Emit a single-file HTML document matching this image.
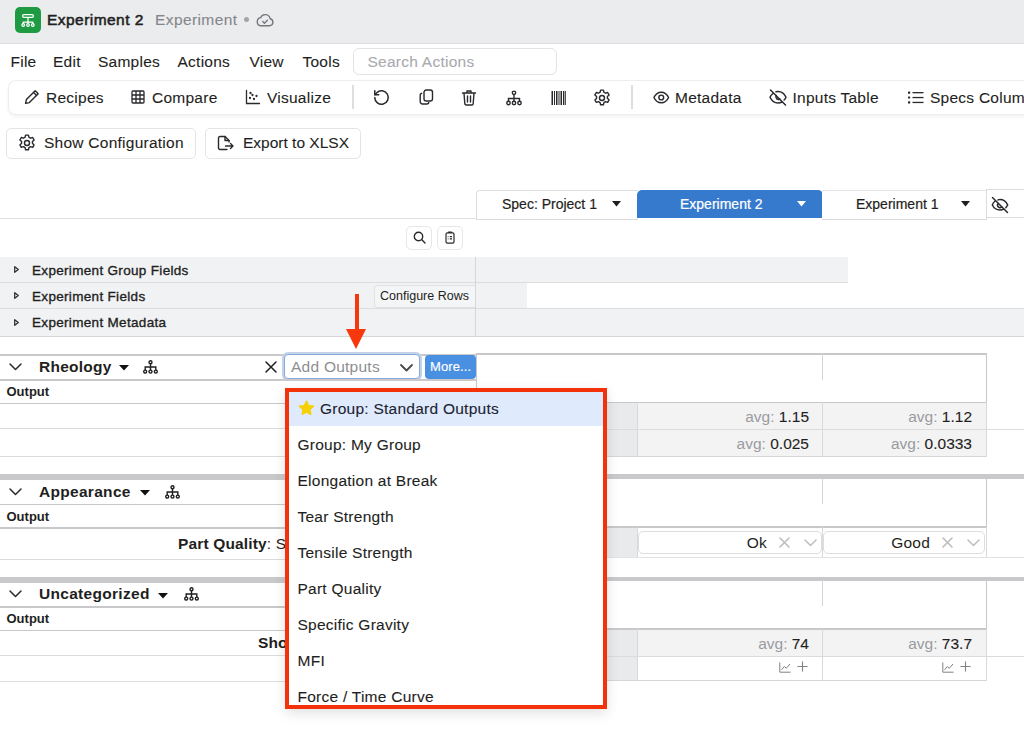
<!DOCTYPE html>
<html><head><meta charset="utf-8">
<style>
*{box-sizing:border-box;margin:0;padding:0}
html,body{width:1024px;height:734px;overflow:hidden;background:#fff;font-family:"Liberation Sans",sans-serif;color:#1f1f22}
.a{position:absolute;white-space:nowrap}
.t15{font-size:15.5px;letter-spacing:0.25px;line-height:18px;-webkit-text-stroke:0.1px currentColor}
svg{position:absolute;overflow:visible}
.hl{position:absolute;height:1px;background:#d6d6d6}
.n{-webkit-text-stroke:0.1px #1f1f22}
.vl{position:absolute;width:1px;background:#d6d6d6}
</style></head><body>

<!-- Title bar -->
<div class="a" style="left:0;top:0;width:1024px;height:44px;background:#ebecee;border-bottom:1px solid #dcdcdf"></div>
<div class="a" style="left:15px;top:7px;width:26px;height:26px;border-radius:5px;background:#1e9a42"></div>
<svg style="left:15px;top:7px" width="26" height="26" viewBox="0 0 26 26" fill="none" stroke="#fff" stroke-width="1.25">
  <rect x="7.6" y="7.7" width="10.8" height="2.6" rx="1.3"/>
  <path d="M13 10.3v3.2M8.2 16.6v-1.6h9.6v1.6M13 13.5v3.1"/>
  <circle cx="8.2" cy="18" r="1.3"/><circle cx="13" cy="18" r="1.3"/><circle cx="17.8" cy="18" r="1.3"/>
</svg>
<div class="a" style="left:47px;top:11px;font-size:15.5px;font-weight:400;line-height:18px;letter-spacing:0.45px;-webkit-text-stroke:0.55px #1f1f22">Experiment 2</div>
<div class="a t15" style="left:155px;top:11px;color:#85868a;letter-spacing:0.4px">Experiment</div>
<div class="a" style="left:244px;top:17px;width:5px;height:5px;border-radius:50%;background:#a5a6aa"></div>
<svg style="left:256px;top:13px" width="18" height="14" viewBox="0 0 18 14" fill="none" stroke="#76777b" stroke-width="1.4" stroke-linejoin="round" stroke-linecap="round">
  <path d="M4.5 12.8h9a3.6 3.6 0 0 0 .6-7.1A5 5 0 0 0 4.6 4.6 4.2 4.2 0 0 0 4.5 12.8z"/>
  <path d="M6.8 8.6l1.6 1.6 3-3"/>
</svg>

<!-- Menu bar -->
<div class="a t15" style="left:10.5px;top:53px">File</div>
<div class="a t15" style="left:53px;top:53px">Edit</div>
<div class="a t15" style="left:98px;top:53px">Samples</div>
<div class="a t15" style="left:177.5px;top:53px">Actions</div>
<div class="a t15" style="left:249.5px;top:53px">View</div>
<div class="a t15" style="left:302.5px;top:53px">Tools</div>
<div class="a" style="left:353px;top:48px;width:204px;height:27px;border:1px solid #e3e3e6;border-radius:6px"></div>
<div class="a t15" style="left:367.5px;top:53px;color:#a9aaae">Search Actions</div>

<!-- Toolbar -->
<div class="a" style="left:9px;top:81px;width:1100px;height:33px;border-radius:7px;background:#fff;box-shadow:0 0 0 1px #eeeef0,0 2px 4px rgba(0,0,0,0.08)"></div>


<!-- toolbar items -->
<svg style="left:24px;top:89px" width="16" height="16" viewBox="0 0 16 16" fill="none" stroke="#2a2a2e" stroke-width="1.4" stroke-linejoin="round" stroke-linecap="round">
  <path d="M11.2 1.8l3 3L5.4 13.6 1.6 14.4l.8-3.8z"/><path d="M9.6 3.4l3 3"/>
</svg>
<div class="a t15" style="left:46px;top:88.5px">Recipes</div>
<svg style="left:131px;top:90px" width="14" height="14" viewBox="0 0 14 14" fill="none" stroke="#2a2a2e" stroke-width="1.3">
  <rect x="1" y="1" width="12" height="12" rx="1"/><path d="M5 1v12M9 1v12M1 5h12M1 9h12"/>
</svg>
<div class="a t15" style="left:152px;top:88.5px">Compare</div>
<svg style="left:245px;top:89px" width="16" height="16" viewBox="0 0 16 16" fill="none" stroke="#2a2a2e" stroke-width="1.3" stroke-linecap="round">
  <path d="M1.5 1.5v13h13"/><circle cx="5" cy="9" r=".5"/><circle cx="7.5" cy="6" r=".5"/><circle cx="9" cy="10" r=".5"/><circle cx="11.5" cy="7" r=".5"/><circle cx="5.5" cy="4" r=".5"/>
</svg>
<div class="a t15" style="left:267px;top:88.5px">Visualize</div>
<div class="a" style="left:352px;top:85px;width:2px;height:24px;background:#dedee0"></div>
<!-- undo -->
<svg style="left:372px;top:88px" width="19" height="19" viewBox="0 0 24 24" fill="none" stroke="#2a2a2e" stroke-width="1.9" stroke-linecap="round" stroke-linejoin="round">
  <path d="M3.5 12a8.5 8.5 0 1 0 2.5-6L3.5 8.5"/><path d="M3.5 3.5v5h5"/>
</svg>
<!-- copy -->
<svg style="left:419px;top:89px" width="15" height="16" viewBox="0 0 15 16" fill="none" stroke="#2a2a2e" stroke-width="1.4" stroke-linejoin="round">
  <rect x="5" y="1" width="8.5" height="11" rx="2.2"/><path d="M3.2 4.2A2 2 0 0 0 1.2 6.2v6.6a2.2 2.2 0 0 0 2.2 2.2h4.4a2 2 0 0 0 2-2"/>
</svg>
<!-- trash -->
<svg style="left:461px;top:89px" width="16" height="17" viewBox="0 0 16 17" fill="none" stroke="#2a2a2e" stroke-width="1.4" stroke-linecap="round" stroke-linejoin="round">
  <path d="M1.5 4h13M6 4V2h4v2M3 4l.8 10.5a1.5 1.5 0 0 0 1.5 1.5h5.4a1.5 1.5 0 0 0 1.5-1.5L13 4M6.5 7v6M9.5 7v6"/>
</svg>
<!-- hierarchy -->
<svg style="left:506px;top:90px" width="16" height="16" viewBox="0 0 16 16" fill="none" stroke="#2a2a2e" stroke-width="1.4">
  <circle cx="8" cy="2.8" r="1.7"/><circle cx="2.5" cy="13" r="1.7"/><circle cx="8" cy="13" r="1.7"/><circle cx="13.5" cy="13" r="1.7"/>
  <path d="M8 4.5v6.8M2.5 11.3V8.5h11v2.8"/>
</svg>
<!-- barcode -->
<svg style="left:551px;top:91px" width="15" height="14" viewBox="0 0 15 14" fill="#2a2a2e">
  <rect x="0.5" y="0" width="1.5" height="14"/><rect x="3" y="0" width="1" height="14"/><rect x="5" y="0" width="1.5" height="14"/><rect x="7.5" y="0" width="1" height="14"/><rect x="9.5" y="0" width="1.5" height="14"/><rect x="12" y="0" width="1" height="14"/><rect x="13.6" y="0" width="1.2" height="14"/>
</svg>
<!-- gear -->
<svg style="left:592px;top:87.5px" width="20" height="20" viewBox="0 0 24 24" fill="none" stroke="#2a2a2e" stroke-width="1.7" stroke-linejoin="round">
  <path d="M10.3 2.5h3.4l.6 2.6 1.9 1.1 2.6-.8 1.7 2.9-2 1.9v2.2l2 1.9-1.7 2.9-2.6-.8-1.9 1.1-.6 2.6h-3.4l-.6-2.6-1.9-1.1-2.6.8-1.7-2.9 2-1.9v-2.2l-2-1.9 1.7-2.9 2.6.8 1.9-1.1z"/><circle cx="12" cy="12" r="3"/>
</svg>
<div class="a" style="left:631px;top:85px;width:2px;height:24px;background:#dedee0"></div>
<!-- eye -->
<svg style="left:653px;top:90.5px" width="16.5" height="13" viewBox="0 0 18 14" fill="none" stroke="#2a2a2e" stroke-width="1.6">
  <path d="M1 7C3 2.8 6 1.2 9 1.2S15 2.8 17 7c-2 4.2-5 5.8-8 5.8S3 11.2 1 7z"/><circle cx="9" cy="7" r="2.6"/>
</svg>
<div class="a t15" style="left:675px;top:88.5px">Metadata</div>
<!-- eye-off -->
<svg style="left:769px;top:89px" width="18" height="17" viewBox="0 0 18 17" fill="none" stroke="#2a2a2e" stroke-width="1.5" stroke-linecap="round">
  <path d="M4 4.5C2.6 5.5 1.6 6.8 1 8.2c2 4.2 5 5.8 8 5.8 1.5 0 2.8-.3 4-1M7 2.7C7.6 2.5 8.3 2.4 9 2.4c3 0 6 1.6 8 5.8-.5 1.1-1.1 2-1.9 2.8"/><path d="M7.2 6.5A2.6 2.6 0 0 0 10.8 10"/><path d="M1.5 1l15 15"/>
</svg>
<div class="a t15" style="left:792.5px;top:88.5px">Inputs Table</div>
<!-- list -->
<svg style="left:908px;top:91px" width="16" height="13" viewBox="0 0 16 13" fill="#2a2a2e">
  <rect x="0" y="0.5" width="2.2" height="2.2" rx=".5"/><rect x="0" y="5.4" width="2.2" height="2.2" rx=".5"/><rect x="0" y="10.3" width="2.2" height="2.2" rx=".5"/>
  <rect x="4.5" y="1" width="11" height="1.3"/><rect x="4.5" y="5.9" width="11" height="1.3"/><rect x="4.5" y="10.8" width="11" height="1.3"/>
</svg>
<div class="a t15" style="left:930px;top:88.5px">Specs Columns</div>

<!-- buttons row -->
<div class="a" style="left:6px;top:128px;width:190px;height:31px;border:1px solid #e4e4e7;border-radius:5px"></div>
<svg style="left:17px;top:133px" width="20" height="20" viewBox="0 0 24 24" fill="none" stroke="#2a2a2e" stroke-width="1.7" stroke-linejoin="round">
  <path d="M10.3 2.5h3.4l.6 2.6 1.9 1.1 2.6-.8 1.7 2.9-2 1.9v2.2l2 1.9-1.7 2.9-2.6-.8-1.9 1.1-.6 2.6h-3.4l-.6-2.6-1.9-1.1-2.6.8-1.7-2.9 2-1.9v-2.2l-2-1.9 1.7-2.9 2.6.8 1.9-1.1z"/><circle cx="12" cy="12" r="3"/>
</svg>
<div class="a t15" style="left:44px;top:134px">Show Configuration</div>
<div class="a" style="left:205px;top:128px;width:156px;height:31px;border:1px solid #e4e4e7;border-radius:5px"></div>
<svg style="left:217px;top:135px" width="17" height="16" viewBox="0 0 17 16" fill="none" stroke="#2a2a2e" stroke-width="1.4" stroke-linecap="round" stroke-linejoin="round">
  <path d="M10 14.5H3a1.5 1.5 0 0 1-1.5-1.5V3A1.5 1.5 0 0 1 3 1.5h5l4 4V7"/><path d="M8 1.5v4h4"/><path d="M8.5 11h7.5M13.5 8.5L16 11l-2.5 2.5"/>
</svg>
<div class="a t15" style="left:243px;top:134px;letter-spacing:0px">Export to XLSX</div>

<!-- spec header -->
<div class="hl" style="left:0;top:218px;width:477px;background:#e2e2e4"></div>
<div class="a" style="left:476px;top:190px;width:162px;height:30px;border:1px solid #dcdcde;border-right:none;border-radius:4px 0 0 0;background:#fff"></div>
<div class="a" style="left:502px;top:196px;font-size:14px;line-height:17px;-webkit-text-stroke:0.2px #1f1f22">Spec: Project 1</div>
<svg style="left:612px;top:201px" width="9" height="6" viewBox="0 0 9 6"><path d="M0 0h9L4.5 5.5z" fill="#1f1f22"/></svg>
<div class="a" style="left:637px;top:190px;width:186px;height:28px;border-radius:5px 5px 0 0;background:#367acd"></div>
<div class="a" style="left:680px;top:196px;font-size:14px;line-height:17px;color:#fff;-webkit-text-stroke:0.2px #fff">Experiment 2</div>
<svg style="left:797px;top:201px" width="9" height="6" viewBox="0 0 9 6"><path d="M0 0h9L4.5 5.5z" fill="#fff"/></svg>
<div class="a" style="left:822px;top:190px;width:165px;height:30px;border:1px solid #dcdcde;border-left:none;border-top-color:#e4e4e6;background:#fff"></div>
<div class="a" style="left:856px;top:196px;font-size:14px;line-height:17px;-webkit-text-stroke:0.2px #1f1f22">Experiment 1</div>
<svg style="left:961px;top:201px" width="9" height="6" viewBox="0 0 9 6"><path d="M0 0h9L4.5 5.5z" fill="#1f1f22"/></svg>
<div class="a" style="left:986px;top:189px;width:60px;height:29px;border:1px solid #dcdcde;background:#fff"></div>
<svg style="left:991px;top:196px" width="18" height="18" viewBox="0 0 18 18" fill="none" stroke="#2a2a2e" stroke-width="1.5" stroke-linecap="round">
  <path d="M4.2 5C2.8 6 1.8 7.4 1.3 9c2 4 5 5 7.7 5 1.4 0 2.6-.3 3.7-.9M7 3.9C7.6 3.7 8.3 3.6 9 3.6c2.8 0 5.7 1.2 7.7 5.4-.5 1-1.1 1.9-1.8 2.6"/><path d="M7.3 7.5A2.4 2.4 0 0 0 10.7 10.9"/><path d="M1.5 1.5l15 15"/>
</svg>

<!-- search / clipboard buttons -->
<div class="a" style="left:406px;top:226px;width:26px;height:24px;border:1px solid #e6e6e8;border-radius:5px"></div>
<svg style="left:413px;top:231px" width="13" height="13" viewBox="0 0 13 13" fill="none" stroke="#2a2a2e" stroke-width="1.4" stroke-linecap="round"><circle cx="5.5" cy="5.5" r="4.2"/><path d="M8.6 8.6l3.4 3.4"/></svg>
<div class="a" style="left:437px;top:226px;width:26px;height:24px;border:1px solid #e6e6e8;border-radius:5px"></div>
<svg style="left:445px;top:231px" width="10" height="13" viewBox="0 0 10 13" fill="none" stroke="#2a2a2e" stroke-width="1.2"><rect x="1" y="1.8" width="8" height="10.4" rx="1.4"/><path d="M3.6 1.3h2.8" stroke-width="1.6" stroke-linecap="round"/><path d="M2.8 5.6h.6M4.8 5.6h2.2M2.8 7.9h.6M4.8 7.9h2.2" stroke-width="1.1"/></svg>

<!-- left grey rows -->
<div class="a" style="left:0;top:257px;width:476px;height:80px;background:#f1f2f4"></div>
<div class="hl" style="left:0;top:282px;width:476px;background:#dcdddf"></div>
<div class="hl" style="left:0;top:308px;width:476px;background:#dcdddf"></div>
<div class="hl" style="left:0;top:336px;width:1024px;background:#d6d7d9"></div>
<div class="vl" style="left:475px;top:257px;height:80px;background:#d6d7d9"></div>
<div class="a" style="left:476px;top:257px;width:372px;height:25px;background:#f1f2f4"></div>
<div class="a" style="left:476px;top:283px;width:51px;height:25px;background:#f1f2f4"></div>
<div class="hl" style="left:476px;top:282px;width:372px;background:#dcdddf"></div>
<div class="hl" style="left:476px;top:308px;width:548px;background:#dcdddf"></div>
<div class="a" style="left:476px;top:309px;width:548px;height:27px;background:#f1f2f4"></div>
<svg style="left:14px;top:266px" width="5" height="7" viewBox="0 0 5 7"><path d="M.7.7L4.3 3.5.7 6.3z" fill="none" stroke="#2a2a2e" stroke-width="1.2" stroke-linejoin="round"/></svg>
<svg style="left:14px;top:292px" width="5" height="7" viewBox="0 0 5 7"><path d="M.7.7L4.3 3.5.7 6.3z" fill="none" stroke="#2a2a2e" stroke-width="1.2" stroke-linejoin="round"/></svg>
<svg style="left:14px;top:319px" width="5" height="7" viewBox="0 0 5 7"><path d="M.7.7L4.3 3.5.7 6.3z" fill="none" stroke="#2a2a2e" stroke-width="1.2" stroke-linejoin="round"/></svg>
<div class="a" style="left:32px;top:262.5px;font-size:13.5px;line-height:16px;letter-spacing:0.32px;-webkit-text-stroke:0.35px #1f1f22">Experiment Group Fields</div>
<div class="a" style="left:32px;top:288.5px;font-size:13.5px;line-height:16px;letter-spacing:0.32px;-webkit-text-stroke:0.35px #1f1f22">Experiment Fields</div>
<div class="a" style="left:32px;top:314.5px;font-size:13.5px;line-height:16px;letter-spacing:0.32px;-webkit-text-stroke:0.35px #1f1f22">Experiment Metadata</div>
<div class="a" style="left:374px;top:285px;width:101px;height:23px;border:1px solid #e2e2e4;border-right:none;border-radius:4px 0 0 4px;background:#f4f5f6"></div>
<div class="a" style="left:380px;top:289px;font-size:12.5px;line-height:15px">Configure Rows</div>

<!-- ===== Rheology ===== -->
<div class="a" style="left:0;top:354px;width:476px;height:2px;background:#c9c9cb"></div>
<svg style="left:9px;top:363px" width="13" height="8" viewBox="0 0 13 8"><path d="M1 1l5.5 5.5L12 1" fill="none" stroke="#2a2a2e" stroke-width="1.5" stroke-linecap="round" stroke-linejoin="round"/></svg>
<div class="a" style="left:39px;top:358px;font-size:15.5px;font-weight:700;line-height:18px;letter-spacing:0.25px">Rheology</div>
<svg style="left:119px;top:365px" width="10" height="6" viewBox="0 0 10 6"><path d="M0 0h10L5 5.6z" fill="#111"/></svg><svg style="left:143px;top:360px" width="15" height="14" viewBox="0 0 15 14" fill="none" stroke="#1f1f22" stroke-width="1.4"><circle cx="7.5" cy="2.3" r="1.5"/><circle cx="2.2" cy="11.6" r="1.5"/><circle cx="7.5" cy="11.6" r="1.5"/><circle cx="12.8" cy="11.6" r="1.5"/><path d="M7.5 3.8v6.3M2.2 10.1V7h10.6v3.1"/></svg>
<svg style="left:265px;top:361px" width="12" height="12" viewBox="0 0 12 12"><path d="M1 1l10 10M11 1L1 11" stroke="#1f1f22" stroke-width="1.5" stroke-linecap="round"/></svg>
<div class="a" style="left:284px;top:354px;width:136px;height:25px;border:1px solid #86a9dc;border-radius:4px;box-shadow:0 0 0 2px #c3d2e6;background:#fff"></div>
<div class="a" style="left:291px;top:358px;font-size:15.5px;letter-spacing:0.25px;line-height:18px;color:#8d8e92">Add Outputs</div>
<svg style="left:400px;top:364px" width="13" height="8" viewBox="0 0 13 8"><path d="M1 1l5.5 5.5L12 1" fill="none" stroke="#4a4a4e" stroke-width="1.8" stroke-linecap="round" stroke-linejoin="round"/></svg>
<div class="a" style="left:424.5px;top:355px;width:51px;height:24px;border-radius:4px;background:#4a90e2"></div>
<div class="a" style="left:430px;top:359px;font-size:13px;line-height:16px;color:#fff;letter-spacing:0.1px;-webkit-text-stroke:0.15px #fff">More...</div>
<div class="a" style="left:0;top:379px;width:476px;height:1.5px;background:#c9c9cb"></div>
<div class="a" style="left:6.5px;top:384px;font-size:13px;font-weight:700;line-height:15px">Output</div>
<div class="a" style="left:0;top:402.5px;width:476px;height:1.5px;background:#c9c9cb"></div>
<div class="hl" style="left:0;top:428px;width:476px;background:#dcdcde"></div>
<div class="hl" style="left:0;top:456px;width:476px;background:#dcdcde"></div>
<!-- right table -->
<div class="a" style="left:476px;top:353px;width:511px;height:50.5px;border:1.5px solid #c8c8ca;border-top-width:2px;border-bottom-width:2px;background:#fff"></div>
<div class="vl" style="left:822px;top:354px;height:26px;background:#d4d4d6"></div>
<div class="a" style="left:476px;top:403px;width:161px;height:53px;background:#e9eaeb"></div>
<div class="a" style="left:637px;top:403px;width:349px;height:53px;background:#f3f3f4"></div>
<div class="hl" style="left:476px;top:429px;width:548px;background:#dcdcde"></div>
<div class="hl" style="left:476px;top:456px;width:510px;background:#d6d6d8"></div>
<div class="vl" style="left:637px;top:402px;height:55px;background:#d9d9db"></div>
<div class="vl" style="left:822px;top:402px;height:55px;background:#d9d9db"></div>
<div class="vl" style="left:986px;top:402px;height:55px;background:#d9d9db"></div>
<div class="a" style="left:640px;top:407.5px;width:169px;text-align:right;font-size:15.5px;letter-spacing:0px;line-height:18px"><span style="color:#9a9b9f">avg: </span><span class="n">1.15</span></div>
<div class="a" style="left:800px;top:407.5px;width:172px;text-align:right;font-size:15.5px;letter-spacing:0px;line-height:18px"><span style="color:#9a9b9f">avg: </span><span class="n">1.12</span></div>
<div class="a" style="left:640px;top:434.5px;width:169px;text-align:right;font-size:15.5px;letter-spacing:0px;line-height:18px"><span style="color:#9a9b9f">avg: </span><span class="n">0.025</span></div>
<div class="a" style="left:800px;top:434.5px;width:172px;text-align:right;font-size:15.5px;letter-spacing:0px;line-height:18px"><span style="color:#9a9b9f">avg: </span><span class="n">0.0333</span></div>

<!-- ===== Appearance ===== -->
<div class="a" style="left:0;top:474px;width:1024px;height:5px;background:#c9c9cb"></div>
<div class="a" style="left:0;top:479px;width:476px;height:1px;background:#c9c9cb"></div>
<svg style="left:9px;top:488px" width="13" height="8" viewBox="0 0 13 8"><path d="M1 1l5.5 5.5L12 1" fill="none" stroke="#2a2a2e" stroke-width="1.5" stroke-linecap="round" stroke-linejoin="round"/></svg>
<div class="a" style="left:39px;top:483px;font-size:15.5px;font-weight:700;line-height:18px;letter-spacing:0.3px">Appearance</div>
<svg style="left:140px;top:490px" width="10" height="6" viewBox="0 0 10 6"><path d="M0 0h10L5 5.6z" fill="#111"/></svg><svg style="left:165px;top:485px" width="15" height="14" viewBox="0 0 15 14" fill="none" stroke="#1f1f22" stroke-width="1.4"><circle cx="7.5" cy="2.3" r="1.5"/><circle cx="2.2" cy="11.6" r="1.5"/><circle cx="7.5" cy="11.6" r="1.5"/><circle cx="12.8" cy="11.6" r="1.5"/><path d="M7.5 3.8v6.3M2.2 10.1V7h10.6v3.1"/></svg>
<div class="a" style="left:0;top:503.5px;width:476px;height:1.5px;background:#c9c9cb"></div>
<div class="a" style="left:6.5px;top:508.5px;font-size:13px;font-weight:700;line-height:15px">Output</div>
<div class="a" style="left:0;top:527px;width:476px;height:1.5px;background:#c9c9cb"></div>
<div class="hl" style="left:0;top:559px;width:476px;background:#dcdcde"></div>
<div class="a" style="left:178px;top:535px;font-size:15.5px;line-height:18px;letter-spacing:0.15px"><b>Part Quality</b>: Standard</div>
<div class="a" style="left:476px;top:479px;width:511px;height:48.5px;border:1.5px solid #c8c8ca;border-top:none;border-bottom-width:2px;background:#fff"></div>
<div class="vl" style="left:822px;top:479px;height:25px;background:#d4d4d6"></div>
<div class="a" style="left:476px;top:528px;width:161px;height:29px;background:#e9eaeb"></div>
<div class="hl" style="left:476px;top:557px;width:548px;background:#e2e2e4"></div>
<div class="vl" style="left:637px;top:527px;height:30px;background:#d9d9db"></div>
<div class="vl" style="left:822px;top:527px;height:30px;background:#d9d9db"></div>
<div class="vl" style="left:986px;top:527px;height:30px;background:#d9d9db"></div>
<div class="a" style="left:638px;top:531px;width:184px;height:23px;border:1px solid #dedee0;border-radius:5px;background:#fff"></div>
<div class="a" style="left:823px;top:531px;width:162px;height:23px;border:1px solid #dedee0;border-radius:5px;background:#fff"></div>
<div class="a" style="left:700px;top:534px;width:67px;text-align:right;font-size:15.5px;line-height:18px;letter-spacing:0.2px">Ok</div>
<div class="a" style="left:860px;top:534px;width:70px;text-align:right;font-size:15.5px;line-height:18px;letter-spacing:0.2px">Good</div>
<svg style="left:779px;top:537px" width="11" height="11" viewBox="0 0 11 11"><path d="M1 1l9 9M10 1L1 10" stroke="#bdbdc0" stroke-width="1.6" stroke-linecap="round"/></svg>
<svg style="left:804px;top:539px" width="13" height="8" viewBox="0 0 13 8"><path d="M1 1l5.5 5.5L12 1" fill="none" stroke="#bdbdc0" stroke-width="1.5" stroke-linecap="round" stroke-linejoin="round"/></svg>
<svg style="left:942px;top:537px" width="11" height="11" viewBox="0 0 11 11"><path d="M1 1l9 9M10 1L1 10" stroke="#bdbdc0" stroke-width="1.6" stroke-linecap="round"/></svg>
<svg style="left:967px;top:539px" width="13" height="8" viewBox="0 0 13 8"><path d="M1 1l5.5 5.5L12 1" fill="none" stroke="#bdbdc0" stroke-width="1.5" stroke-linecap="round" stroke-linejoin="round"/></svg>

<!-- ===== Uncategorized ===== -->
<div class="a" style="left:0;top:576.5px;width:1024px;height:4px;background:#c9c9cb"></div>
<div class="a" style="left:0;top:580.5px;width:476px;height:2px;background:#c9c9cb"></div>
<svg style="left:9px;top:590px" width="13" height="8" viewBox="0 0 13 8"><path d="M1 1l5.5 5.5L12 1" fill="none" stroke="#2a2a2e" stroke-width="1.5" stroke-linecap="round" stroke-linejoin="round"/></svg>
<div class="a" style="left:39px;top:585px;font-size:15.5px;font-weight:700;line-height:18px;letter-spacing:0.3px">Uncategorized</div>
<svg style="left:158px;top:593px" width="10" height="6" viewBox="0 0 10 6"><path d="M0 0h10L5 5.6z" fill="#111"/></svg><svg style="left:184px;top:587px" width="15" height="14" viewBox="0 0 15 14" fill="none" stroke="#1f1f22" stroke-width="1.4"><circle cx="7.5" cy="2.3" r="1.5"/><circle cx="2.2" cy="11.6" r="1.5"/><circle cx="7.5" cy="11.6" r="1.5"/><circle cx="12.8" cy="11.6" r="1.5"/><path d="M7.5 3.8v6.3M2.2 10.1V7h10.6v3.1"/></svg>
<div class="a" style="left:0;top:606px;width:476px;height:1.5px;background:#c9c9cb"></div>
<div class="a" style="left:6.5px;top:611px;font-size:13px;font-weight:700;line-height:15px">Output</div>
<div class="a" style="left:0;top:629.5px;width:476px;height:1.5px;background:#c9c9cb"></div>
<div class="hl" style="left:0;top:655px;width:476px;background:#dcdcde"></div>
<div class="hl" style="left:0;top:681px;width:476px;background:#dcdcde"></div>
<div class="a" style="left:258px;top:634px;font-size:15.5px;font-weight:700;line-height:18px;letter-spacing:0.15px">Shore A</div>
<div class="a" style="left:476px;top:580.5px;width:511px;height:49.5px;border:1.5px solid #c8c8ca;border-top:none;border-bottom-width:2px;background:#fff"></div>
<div class="vl" style="left:822px;top:580px;height:26px;background:#d4d4d6"></div>
<div class="a" style="left:476px;top:630px;width:161px;height:50px;background:#e9eaeb"></div>
<div class="a" style="left:637px;top:630px;width:349px;height:26px;background:#f3f3f4"></div>
<div class="hl" style="left:476px;top:656px;width:548px;background:#dcdcde"></div>
<div class="hl" style="left:476px;top:680px;width:510px;background:#d6d6d8"></div>
<div class="vl" style="left:637px;top:629px;height:52px;background:#d9d9db"></div>
<div class="vl" style="left:822px;top:629px;height:52px;background:#d9d9db"></div>
<div class="vl" style="left:986px;top:629px;height:52px;background:#d9d9db"></div>
<div class="a" style="left:640px;top:634.5px;width:169px;text-align:right;font-size:15.5px;letter-spacing:0px;line-height:18px"><span style="color:#9a9b9f">avg: </span><span class="n">74</span></div>
<div class="a" style="left:800px;top:634.5px;width:172px;text-align:right;font-size:15.5px;letter-spacing:0px;line-height:18px"><span style="color:#9a9b9f">avg: </span><span class="n">73.7</span></div>
<svg style="left:779px;top:662px" width="12" height="11" viewBox="0 0 12 11" fill="none" stroke="#808085" stroke-width="1" stroke-linecap="round" stroke-linejoin="round"><path d="M.8.8v9.4h10.4"/><path d="M2.8 7.5l2.5-3 2 1.8 3.4-4"/></svg>
<svg style="left:797px;top:661px" width="11" height="11" viewBox="0 0 11 11"><path d="M5.5 .5v10M.5 5.5h10" stroke="#808085" stroke-width="1.1"/></svg>
<svg style="left:942px;top:662px" width="12" height="11" viewBox="0 0 12 11" fill="none" stroke="#808085" stroke-width="1" stroke-linecap="round" stroke-linejoin="round"><path d="M.8.8v9.4h10.4"/><path d="M2.8 7.5l2.5-3 2 1.8 3.4-4"/></svg>
<svg style="left:960px;top:661px" width="11" height="11" viewBox="0 0 11 11"><path d="M5.5 .5v10M.5 5.5h10" stroke="#808085" stroke-width="1.1"/></svg>

<!-- ===== red arrow ===== -->
<div class="a" style="left:354.5px;top:294px;width:4px;height:36px;background:#f6380c"></div>
<svg style="left:346px;top:328.5px" width="20" height="20" viewBox="0 0 20 20"><path d="M0 0h20L10 20z" fill="#f6380c"/></svg>

<!-- ===== dropdown ===== -->
<div class="a" style="left:285px;top:387.5px;width:322px;height:321.5px;border:4px solid #f3320c;background:#fff;box-shadow:0 4px 12px rgba(0,0,0,0.12)"></div>
<div class="a" style="left:289px;top:391.5px;width:314px;height:34.5px;background:#dfeafc"></div>
<svg style="left:298px;top:400px" width="17" height="16" viewBox="0 0 24 23"><path d="M12 1.2l3.2 6.6 7.2 1-5.2 5 1.3 7.1L12 17.5l-6.5 3.4 1.3-7.1-5.2-5 7.2-1z" fill="#f6d000" stroke="#f6d000" stroke-width="1.5" stroke-linejoin="round"/></svg>
<div class="a t15" style="left:320px;top:400px;color:#1c2330">Group: Standard Outputs</div>
<div class="a t15" style="left:297.5px;top:436px">Group: My Group</div>
<div class="a t15" style="left:297.5px;top:472px">Elongation at Break</div>
<div class="a t15" style="left:297.5px;top:508px">Tear Strength</div>
<div class="a t15" style="left:297.5px;top:544px">Tensile Strength</div>
<div class="a t15" style="left:297.5px;top:580px">Part Quality</div>
<div class="a t15" style="left:297.5px;top:616px">Specific Gravity</div>
<div class="a t15" style="left:297.5px;top:652px">MFI</div>
<div class="a t15" style="left:297.5px;top:688px">Force / Time Curve</div>
</body></html>
